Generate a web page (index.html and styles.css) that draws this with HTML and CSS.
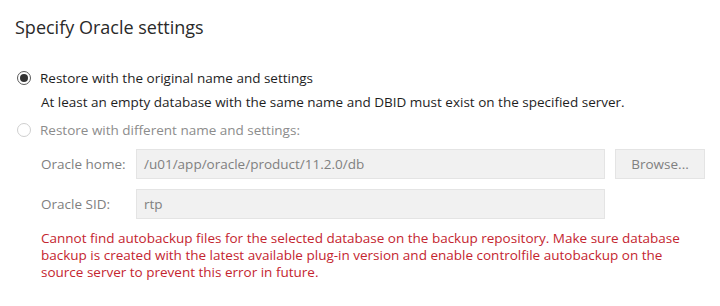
FILE: index.html
```html
<!DOCTYPE html>
<html>
<head>
<meta charset="utf-8">
<link rel="stylesheet" href="styles.css">
</head>
<body>
<div class="page">
  <h1 class="title">Specify Oracle settings</h1>
  <div class="option">
    <span class="radio checked"><span class="dot"></span></span>
    <span class="opt-label">Restore with the original name and settings</span>
  </div>
  <div class="desc">At least an empty database with the same name and DBID must exist on the specified server.</div>
  <div class="option option2">
    <span class="radio disabled"></span>
    <span class="opt-label muted">Restore with different name and settings:</span>
  </div>
  <div class="form">
    <div class="row">
      <span class="lbl">Oracle home:</span>
      <div class="field">/u01/app/oracle/product/11.2.0/db</div>
      <div class="btn">Browse...</div>
    </div>
    <div class="row">
      <span class="lbl">Oracle SID:</span>
      <div class="field">rtp</div>
    </div>
  </div>
  <div class="error">Cannot find autobackup files for the selected database on the backup repository. Make sure database backup is created with the latest available plug-in version and enable controlfile autobackup on the source server to prevent this error in future.</div>
</div>
</body>
</html>
```
FILE: styles.css
```css
html, body { margin: 0; padding: 0; background: #fff; }
body { font-family: "Open Sans", "Noto Sans", sans-serif; color: #1e1e1e; }
.page { padding: 15px 0 0 15px; width: 700px; }
.title { margin: 0; font-size: 18px; font-weight: 400; line-height: 24px; color: #2a2a2a; }
.option { display: flex; align-items: center; gap: 9px; margin-top: 29px; height: 20px; font-size: 13.5px; }
.option2 { margin-top: 8px; }
.radio { width: 14px; height: 14px; border: 1px solid #5a5a5a; border-radius: 50%; box-sizing: border-box; display: flex; align-items: center; justify-content: center; margin-left: 2px; flex: none; }
.radio.disabled { border-color: #cfcfcf; }
.dot { width: 8px; height: 8px; border-radius: 50%; background: #333; }
.opt-label { line-height: 20px; }
.muted { color: #8c8c8c; }
.desc { margin: 4px 0 0 26px; font-size: 13.5px; line-height: 20px; }
.form { margin-left: 26px; margin-top: 9px; display: flex; flex-direction: column; gap: 10px; font-size: 13.5px; color: #808080; }
.row { display: flex; align-items: center; }
.lbl { width: 95px; }
.field { width: 469px; height: 30px; box-sizing: border-box; background: #f1f1f1; border: 1px solid #e4e4e4; padding-left: 7px; line-height: 28px; }
.btn { margin-left: 10px; width: 90px; height: 30px; box-sizing: border-box; background: #f1f1f1; border: 1px solid #e4e4e4; text-align: center; line-height: 28px; }
.error { margin: 11px 0 0 26px; width: 648px; font-size: 13.5px; line-height: 17px; color: #c4252f; }
```
